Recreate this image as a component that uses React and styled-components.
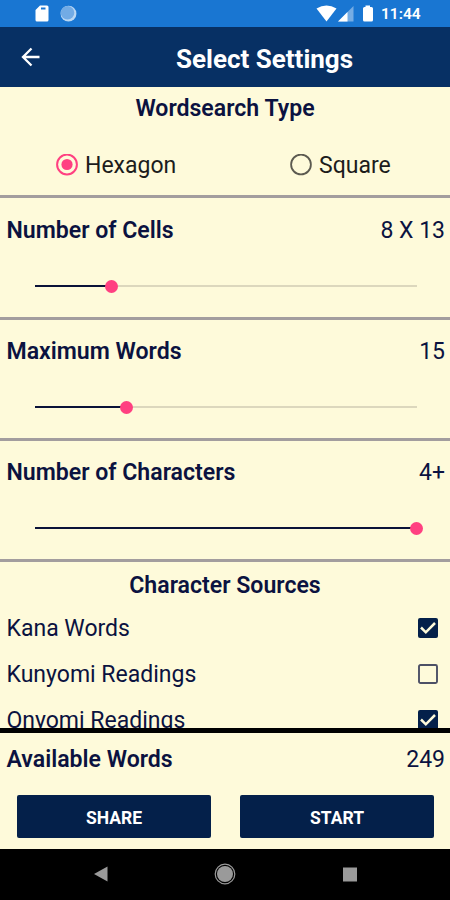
import React from 'react';
import styled, { createGlobalStyle } from 'styled-components'

const GlobalStyle = createGlobalStyle`
  body {
    margin: 0;
    background-color: #fefada;
    font-family: Roboto, "Liberation Sans", sans-serif;
  }
`

const Screen = styled.div`
  display: flex;
  flex-direction: column;
  width: 450px;
  height: 900px;
  overflow: hidden;
  color: #0b1240;
  background-color: #fefada;
`

const StatusBar = styled.div`
  display: flex;
  flex: none;
  height: 27px;
  color: white;
  background-color: #1976d2;
`

const StatusIcons = styled.svg`
  flex: none;
  display: block;
`

const Clock = styled.div`
  margin-left: 5px;
  font-size: 15.5px;
  font-weight: 600;
  line-height: 29px;
`

const AppBar = styled.div`
  display: flex;
  flex: none;
  align-items: center;
  height: 60px;
  color: white;
  background-color: #073064;
`

const BackArrow = styled.svg`
  flex: none;
  margin-left: 21px;
`

const Title = styled.div`
  flex: 1;
  padding: 4px 0 0 39px;
  text-align: center;
  font-size: 26px;
  font-weight: 700;
  line-height: 30px;
`

const Settings = styled.div`
  flex: none;
  height: 641px;
  overflow: hidden;
`

const Section = styled.div`
  box-sizing: border-box;
  height: ${props => props.height}px;
  border-bottom: 3px solid #a39d9e;
`

const Heading = styled.div`
  height: ${props => props.height}px;
  line-height: ${props => props.height}px;
  text-align: center;
  font-size: 23.1px;
  font-weight: 600;
`

const Choices = styled.div`
  display: flex;
  height: 68px;
  align-items: center;
`

const Choice = styled.div`
  display: flex;
  flex: none;
  align-items: center;
  width: ${props => props.width}px;
  padding-left: ${props => props.inset}px;
  color: #1c1c1c;
  font-size: 23px;
  gap: 7px;
`

const Row = styled.div`
  display: flex;
  justify-content: space-between;
  align-items: center;
  height: ${props => props.height}px;
  padding: 0 ${props => props.right || 5}px 0 6.5px;
  font-size: 23px;
`

const Label = styled.span`
  font-size: ${props => props.bold ? 23.1 : 23}px;
  font-weight: ${props => props.bold ? 600 : 400};
`

const Slider = styled.div`
  display: flex;
  align-items: center;
  height: 48px;
  padding: 0 33px 0 35px;
`

const Filled = styled.div`
  width: ${props => props.amount}px;
  height: 2px;
  background-color: #0b1238;
`

const Rest = styled.div`
  flex: 1;
  height: 2px;
  background-color: #dcd7bd;
`

const Thumb = styled.div`
  flex: none;
  width: 13px;
  height: 13px;
  margin: 0 -6px 0 -7px;
  border-radius: 50%;
  background-color: #ff4081;
  z-index: 1;
`

const Footer = styled.div`
  flex: none;
  box-sizing: border-box;
  height: 121px;
  border-top: 5px solid black;
`

const Buttons = styled.div`
  display: flex;
  justify-content: space-between;
  padding: 10px 16px 0 17px;
`

const Button = styled.div`
  width: 194px;
  height: 43px;
  border-radius: 2px;
  color: white;
  background-color: #04204a;
  text-align: center;
  font-size: 17.5px;
  font-weight: 700;
  line-height: 46px;
`

const NavBar = styled.div`
  flex: none;
  height: 51px;
  background-color: black;
`

const Radio = ({ checked }) => (
  <svg width="22" height="22" viewBox="0 0 22 22">
    <circle cx="11" cy="10.5" r="9.9" fill="none" stroke={checked ? "#ff4081" : "#5c5a50"} strokeWidth={checked ? 2 : 1.8}/>
    {checked ? <circle cx="11" cy="10.5" r="5.6" fill="#ff4081"/> : null}
  </svg>
)

const BoxIcon = styled.svg`
  flex: none;
  margin-bottom: 1px;
`

const CheckBox = ({ checked }) => (
  <BoxIcon width="20" height="20" viewBox="0 0 20 20">
    {checked ?
      <>
        <rect width="20" height="20" rx="2" fill="#04204a"/>
        <path d="M3 9.5L7.8 14.3L17 5" fill="none" stroke="#fefada" strokeWidth="2.5"/>
      </>
    : <rect x="1" y="1" width="18" height="18" rx="1.5" fill="none" stroke="#4d5066" strokeWidth="1.9"/>}
  </BoxIcon>
)

const SliderSection = ({ height, rowHeight, label, value, amount }) => (
  <Section height={height}>
    <Row height={rowHeight}>
      <Label bold>{label}</Label>
      <span>{value}</span>
    </Row>
    <Slider>
      <Filled amount={amount}/>
      <Thumb/>
      <Rest/>
    </Slider>
  </Section>
)

export default class App extends React.Component {
  render() {
    return (
      <Screen>
        <GlobalStyle/>
        <StatusBar>
          <StatusIcons width="376" height="27" viewBox="0 0 376 27" fill="white">
            <path fillRule="evenodd" d="M40 5.5H47Q48.5 5.5 48.5 7V20Q48.5 21.5 47 21.5H37Q35.5 21.5 35.5 20V10ZM41 7.5V9.5H45.5V7.5Z"/>
            <circle cx="68.5" cy="13.7" r="7.9" fill="#b9d7f4"/>
            <circle cx="67.5" cy="12.7" r="6.8" fill="#72abe5"/>
            <path d="M316.5 8.5Q326.5 2.5 336.5 8.5L326.5 21.5Z"/>
            <path d="M353.5 6V21.5H338Z" opacity="0.4"/>
            <path d="M347.5 12V21.5H338Z"/>
            <path d="M365.5 5.5H370V7H371.5Q373 7 373 8.5V20Q373 21.5 371.5 21.5H364.5Q363 21.5 363 20V8.5Q363 7 364.5 7H365.5Z"/>
          </StatusIcons>
          <Clock>11:44</Clock>
        </StatusBar>
        <AppBar>
          <BackArrow width="19" height="20" viewBox="0 0 19 20" fill="none" stroke="white" strokeWidth="2.3">
            <path d="M18.5 10H2M10.5 1.5L2 10L10.5 18.5"/>
          </BackArrow>
          <Title>Select Settings</Title>
        </AppBar>
        <Settings>
          <Section height={111}>
            <Heading height={44}>Wordsearch Type</Heading>
            <Choices>
              <Choice inset={56} width={234}><Radio checked/>Hexagon</Choice>
              <Choice><Radio/>Square</Choice>
            </Choices>
          </Section>
          <SliderSection height={122} rowHeight={64} label="Number of Cells" value="8 X 13" amount={77}/>
          <SliderSection height={121} rowHeight={63} label="Maximum Words" value="15" amount={92}/>
          <SliderSection height={121} rowHeight={63} label="Number of Characters" value="4+" amount={382}/>
          <Heading height={47}>Character Sources</Heading>
          <Row height={38} right={12}><Label>Kana Words</Label><CheckBox checked/></Row>
          <Row height={54} right={12}><Label>Kunyomi Readings</Label><CheckBox/></Row>
          <Row height={39} right={12}><Label>Onyomi Readings</Label><CheckBox checked/></Row>
        </Settings>
        <Footer>
          <Row height={52}>
            <Label bold>Available Words</Label>
            <span>249</span>
          </Row>
          <Buttons>
            <Button>SHARE</Button>
            <Button>START</Button>
          </Buttons>
        </Footer>
        <NavBar>
          <svg width="450" height="51" viewBox="0 0 450 51" fill="#9a9a9a">
            <path d="M94 25L107.5 17.5V32.5Z"/>
            <circle cx="225" cy="25" r="8"/>
            <circle cx="225" cy="25" r="9.8" fill="none" stroke="#9a9a9a" strokeWidth="1.2"/>
            <rect x="343" y="18.5" width="14" height="14"/>
          </svg>
        </NavBar>
      </Screen>
    )
  }
}
